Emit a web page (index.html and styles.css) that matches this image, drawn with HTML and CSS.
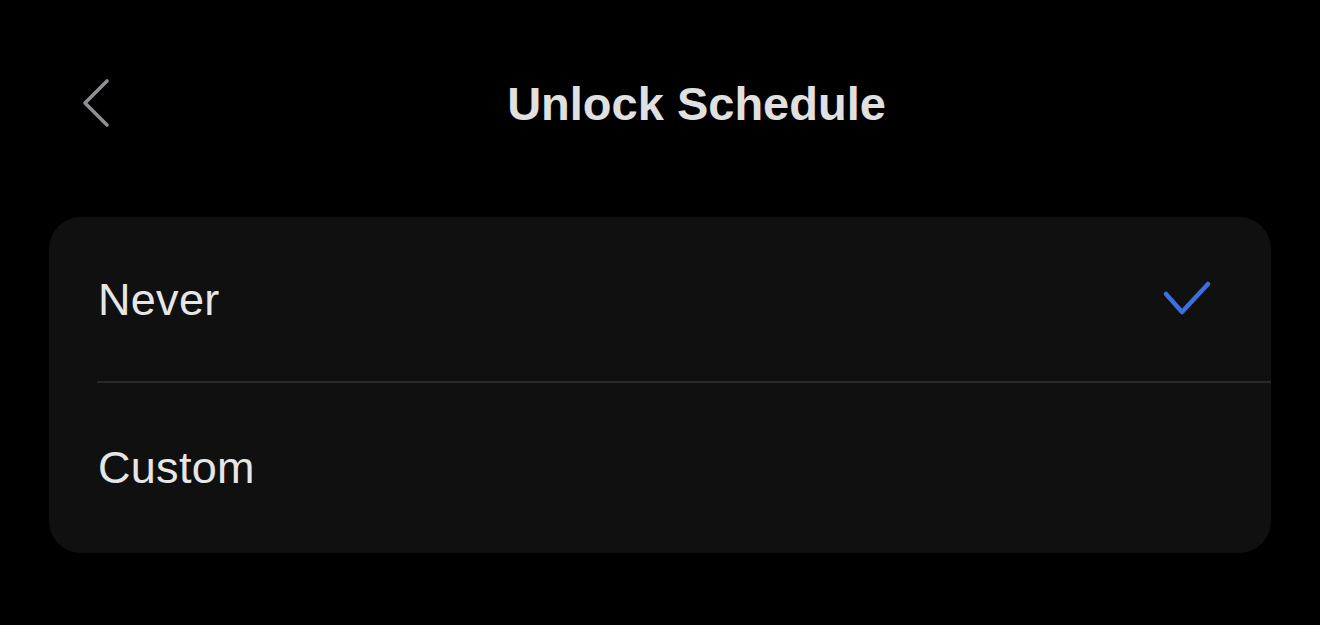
FILE: index.html
```html
<!DOCTYPE html>
<html lang="en">
  <head>
    <meta charset="UTF-8" />
    <title>Unlock Schedule</title>
    <link rel="stylesheet" href="styles.css">
  </head>
  <body>
    <div class="header">
      <div class="back">
        <svg width="30" height="50" viewBox="0 0 30 50">
          <path d="M25 3 L3 25 L25 47" fill="none" stroke="#8e8e93" stroke-width="3.6" stroke-linecap="round" stroke-linejoin="round" />
        </svg>
      </div>
      <h3 class="title">Unlock Schedule</h3>
      <div class="spacer"></div>
    </div>

    <!-- 选项列表 -->
    <div class="card">
      <div class="row first">
        <span class="label">Never</span>
        <svg class="check" width="52" height="38" viewBox="0 0 52 38">
          <path d="M5 14 L21 32 L47 4" fill="none" stroke="#3b6fe0" stroke-width="4.5" stroke-linecap="round" stroke-linejoin="round" />
        </svg>
      </div>
      <div class="divider"></div>
      <div class="row second">
        <span class="label">Custom</span>
      </div>
    </div>
  </body>
</html>
```

FILE: styles.css
```css
body {
  margin: 0;
  padding: 0;
  background-color: #000;
  font-family: "Liberation Sans", Arial, sans-serif;
  color: #e4e4e4;
}

.header {
  display: flex;
  align-items: center;
  height: 96px;
  padding-top: 55px;
}

.back {
  width: 146px;
  padding-left: 82px;
  box-sizing: border-box;
  display: flex;
  align-items: center;
}

.back svg {
  display: block;
}

.title {
  flex: 1;
  margin: 0;
  text-align: center;
  font-size: 47px;
  font-weight: 700;
  color: #e0e0e0;
}

.spacer {
  width: 73px;
}

.card {
  margin: 66px 49px 0;
  background-color: #101010;
  border-radius: 32px;
}

.row {
  display: flex;
  align-items: center;
  justify-content: space-between;
  padding: 0 58px 0 49px;
}

.row.first {
  height: 165px;
}

.row.second {
  height: 170px;
}

.label {
  font-size: 45px;
  letter-spacing: 0.3px;
  color: #e6e6e6;
}

.check {
  display: block;
  margin-top: -2px;
}

.divider {
  height: 2px;
  margin-left: 48px;
  margin-top: -1px;
  background-color: #2a2a2a;
}
```
